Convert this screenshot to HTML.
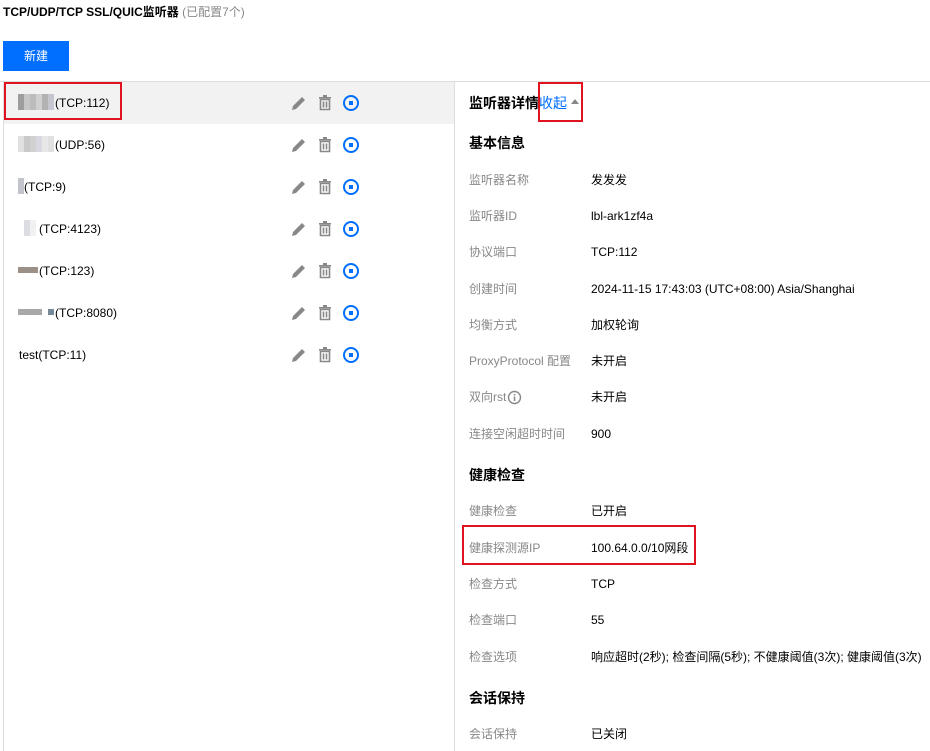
<!DOCTYPE html>
<html><head><meta charset="utf-8"><style>
*{margin:0;padding:0;box-sizing:border-box}
body{width:930px;height:751px;background:#fff;font-family:"Liberation Sans","Noto Sans CJK SC",sans-serif;font-size:12px;color:#000;position:relative;overflow:hidden}
.a{position:absolute;white-space:nowrap;line-height:16px}
.lb{color:#888}
.h{font-weight:bold;font-size:14px}
.red{position:absolute;border:2px solid #e0141e}
.blk{position:absolute;height:16px;display:flex}
.blk i{display:block;width:6px;height:16px}
.ic{position:absolute}
.r{margin-top:1px}
</style></head><body>
<div class="a" style="left:3px;top:4px;font-weight:bold">TCP/UDP/TCP SSL/QUIC监听器 <span style="color:#888;font-weight:normal">(已配置7个)</span></div>
<div style="position:absolute;left:3px;top:41px;width:66px;height:30px;background:#006eff;color:#fff;text-align:center;line-height:30px;font-size:12px">新建</div>
<div style="position:absolute;left:0;top:81px;width:930px;height:1px;background:#ddd"></div>
<div style="position:absolute;left:3px;top:82px;width:1px;height:669px;background:#ddd"></div>
<div style="position:absolute;left:454px;top:82px;width:1px;height:669px;background:#ddd"></div>
<div style="position:absolute;left:4px;top:82px;width:450px;height:42px;background:#f2f2f2"></div>

<div class="blk" style="left:18px;top:94px;opacity:.6"><i style="background:#666"></i><i style="background:#aaa"></i><i style="background:#999"></i><i style="background:#bbb"></i><i style="background:#888"></i><i style="background:#aab"></i></div>
<div class="a" style="left:55px;top:95px">(TCP:112)</div>
<div class="blk" style="left:18px;top:136px;opacity:.45"><i style="background:#bbb"></i><i style="background:#888"></i><i style="background:#999"></i><i style="background:#aab"></i><i style="background:#ccc"></i><i style="background:#bbb"></i></div>
<div class="a" style="left:55px;top:137px">(UDP:56)</div>
<div class="blk" style="left:18px;top:178px;opacity:.5"><i style="background:#889;width:6px"></i></div>
<div class="a" style="left:24px;top:179px">(TCP:9)</div>
<div class="blk" style="left:24px;top:220px;opacity:.4"><i style="background:#aab"></i><i style="background:#ddd"></i></div>
<div class="a" style="left:39px;top:221px">(TCP:4123)</div>
<div class="blk" style="left:18px;top:267px;height:6px"><i style="background:#9a9088;height:6px;width:20px"></i></div>
<div class="a" style="left:39px;top:263px">(TCP:123)</div>
<div class="blk" style="left:18px;top:309px;height:6px"><i style="background:#a8a8a8;height:6px;width:24px"></i><i style="width:6px"></i><i style="background:#789;height:6px"></i></div>
<div class="a" style="left:55px;top:305px">(TCP:8080)</div>
<div class="a" style="left:19px;top:347px">test(TCP:11)</div>

<svg class="ic" style="left:0;top:0" width="454" height="400">
<defs>
<g id="row">
<path d="M293 14 L302 5 L305 8 L296 17 L292 18 Z" fill="#888"/>
<rect x="319" y="5" width="12" height="1.6" fill="#888"/><rect x="323" y="3" width="4" height="2" fill="#888"/>
<path d="M320.5 7.5 h9 v10 h-9 z M323.5 9.5 v6 M326.5 9.5 v6" fill="none" stroke="#888" stroke-width="1.6"/>
<circle cx="351" cy="11" r="7" fill="none" stroke="#006eff" stroke-width="2"/><rect x="349" y="9" width="4" height="4" fill="#006eff"/>
</g></defs>
<use href="#row" y="92"/><use href="#row" y="134"/><use href="#row" y="176"/><use href="#row" y="218"/><use href="#row" y="260"/><use href="#row" y="302"/><use href="#row" y="344"/>
</svg>
<div class="red" style="left:4px;top:82px;width:118px;height:38px"></div>

<div class="a h" style="left:469px;top:95px">监听器详情<span style="color:#006eff;font-weight:normal">收起</span></div>
<svg class="ic" style="left:571px;top:99px" width="8" height="5"><path d="M0 5 L4 0 L8 5Z" fill="#888"/></svg>
<div class="red" style="left:538px;top:82px;width:45px;height:40px"></div>
<div class="a h" style="left:469px;top:135px">基本信息</div>
<div class="a lb" style="left:469px;top:172px">监听器名称</div><div class="a" style="left:591px;top:172px">发发发</div>
<div class="a lb" style="left:469px;top:208px">监听器ID</div><div class="a" style="left:591px;top:208px">lbl-ark1zf4a</div>
<div class="a lb" style="left:469px;top:244px">协议端口</div><div class="a" style="left:591px;top:244px">TCP:112</div>
<div class="a lb" style="left:469px;top:281px">创建时间</div><div class="a" style="left:591px;top:281px">2024-11-15 17:43:03 (UTC+08:00) Asia/Shanghai</div>
<div class="a lb" style="left:469px;top:317px">均衡方式</div><div class="a" style="left:591px;top:317px">加权轮询</div>
<div class="a lb" style="left:469px;top:353px">ProxyProtocol 配置</div><div class="a" style="left:591px;top:353px">未开启</div>
<div class="a lb" style="left:469px;top:389px">双向rst</div>
<svg class="ic" style="left:507px;top:390px" width="15" height="15"><circle cx="7.5" cy="7.5" r="6" fill="none" stroke="#888" stroke-width="1.4"/><rect x="6.8" y="6.5" width="1.5" height="4.5" fill="#888"/><rect x="6.8" y="4" width="1.5" height="1.5" fill="#888"/></svg>
<div class="a" style="left:591px;top:389px">未开启</div>
<div class="a lb" style="left:469px;top:426px">连接空闲超时时间</div><div class="a" style="left:591px;top:426px">900</div>
<div class="a h" style="left:469px;top:467px">健康检查</div>
<div class="a lb" style="left:469px;top:503px">健康检查</div><div class="a" style="left:591px;top:503px">已开启</div>
<div class="a lb" style="left:469px;top:540px">健康探测源IP</div><div class="a" style="left:591px;top:540px">100.64.0.0/10网段</div>
<div class="red" style="left:462px;top:525px;width:234px;height:40px"></div>
<div class="a lb" style="left:469px;top:576px">检查方式</div><div class="a" style="left:591px;top:576px">TCP</div>
<div class="a lb" style="left:469px;top:612px">检查端口</div><div class="a" style="left:591px;top:612px">55</div>
<div class="a lb" style="left:469px;top:649px">检查选项</div><div class="a" style="left:591px;top:649px">响应超时(2秒); 检查间隔(5秒); 不健康阈值(3次); 健康阈值(3次)</div>
<div class="a h" style="left:469px;top:690px">会话保持</div>
<div class="a lb" style="left:469px;top:726px">会话保持</div><div class="a" style="left:591px;top:726px">已关闭</div>
</body></html>
